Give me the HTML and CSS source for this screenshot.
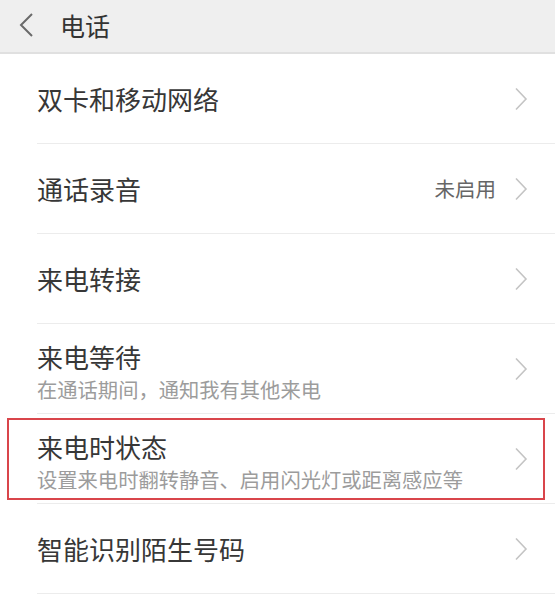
FILE: index.html
```html
<!DOCTYPE html>
<html lang="zh-CN">
<head>
<meta charset="utf-8">
<title>电话</title>
<link rel="stylesheet" href="styles.css">
</head>
<body>
<header class="topbar">
  <svg class="back" width="16" height="24" viewBox="0 0 16 24"><path d="M14 1 L3 12 L14 23" fill="none" stroke="#6a6a6a" stroke-width="2"/></svg>
  <h1 class="title">电话</h1>
</header>
<main class="list">
  <div class="row">
    <div class="text"><div class="main-text">双卡和移动网络</div></div>
    <svg class="chev" width="14" height="24" viewBox="0 0 14 24"><path d="M2 1.5 L12 12 L2 22.5" fill="none" stroke="#c4c4c4" stroke-width="1.6"/></svg>
  </div>
  <div class="row">
    <div class="text"><div class="main-text">通话录音</div></div>
    <span class="value">未启用</span>
    <svg class="chev" width="14" height="24" viewBox="0 0 14 24"><path d="M2 1.5 L12 12 L2 22.5" fill="none" stroke="#c4c4c4" stroke-width="1.6"/></svg>
  </div>
  <div class="row">
    <div class="text"><div class="main-text">来电转接</div></div>
    <svg class="chev" width="14" height="24" viewBox="0 0 14 24"><path d="M2 1.5 L12 12 L2 22.5" fill="none" stroke="#c4c4c4" stroke-width="1.6"/></svg>
  </div>
  <div class="row">
    <div class="text two"><div class="main-text">来电等待</div><div class="sub-text">在通话期间，通知我有其他来电</div></div>
    <svg class="chev" width="14" height="24" viewBox="0 0 14 24"><path d="M2 1.5 L12 12 L2 22.5" fill="none" stroke="#c4c4c4" stroke-width="1.6"/></svg>
  </div>
  <div class="row highlighted">
    <div class="text two"><div class="main-text">来电时状态</div><div class="sub-text">设置来电时翻转静音、启用闪光灯或距离感应等</div></div>
    <svg class="chev" width="14" height="24" viewBox="0 0 14 24"><path d="M2 1.5 L12 12 L2 22.5" fill="none" stroke="#c4c4c4" stroke-width="1.6"/></svg>
    <div class="redbox"></div>
  </div>
  <div class="row">
    <div class="text"><div class="main-text">智能识别陌生号码</div></div>
    <svg class="chev" width="14" height="24" viewBox="0 0 14 24"><path d="M2 1.5 L12 12 L2 22.5" fill="none" stroke="#c4c4c4" stroke-width="1.6"/></svg>
  </div>
</main>
</body>
</html>
```
FILE: styles.css
```css
html, body {
  margin: 0;
  padding: 0;
  background: #ffffff;
  font-family: "Noto Sans CJK SC", "Noto Sans", sans-serif;
  overflow: hidden;
}
.topbar {
  background: #efefef;
  border-bottom: 2px solid #e0e0e0;
  display: flex;
  align-items: center;
  padding-left: 18px;
  padding-bottom: 2px;
  box-sizing: border-box;
  height: 54px;
}
.back {
  display: block;
  margin-right: 26px;
}
.title {
  margin: 0;
  font-size: 25px;
  font-weight: normal;
  color: #333333;
  line-height: 1.2;
}
.list {
  display: flex;
  flex-direction: column;
}
.row {
  position: relative;
  margin-left: 37px;
  height: 89px;
  border-bottom: 1px solid #ececec;
  display: flex;
  align-items: center;
  padding-right: 27px;
}
.text {
  flex: 1;
  display: flex;
  flex-direction: column;
}
.text.two {
  padding-top: 6px;
  gap: 4px;
}
.main-text {
  font-size: 26px;
  line-height: 31px;
  color: #373737;
}
.sub-text {
  font-size: 20.3px;
  line-height: 26px;
  color: #9c9c9c;
}
.value {
  font-size: 20.5px;
  color: #666666;
  margin-right: 18px;
  line-height: 1.2;
}
.chev {
  display: block;
  flex: none;
}
.redbox {
  position: absolute;
  left: -30px;
  right: 10px;
  top: 4px;
  bottom: 3px;
  border: 2px solid #d9454b;
  pointer-events: none;
}
```
